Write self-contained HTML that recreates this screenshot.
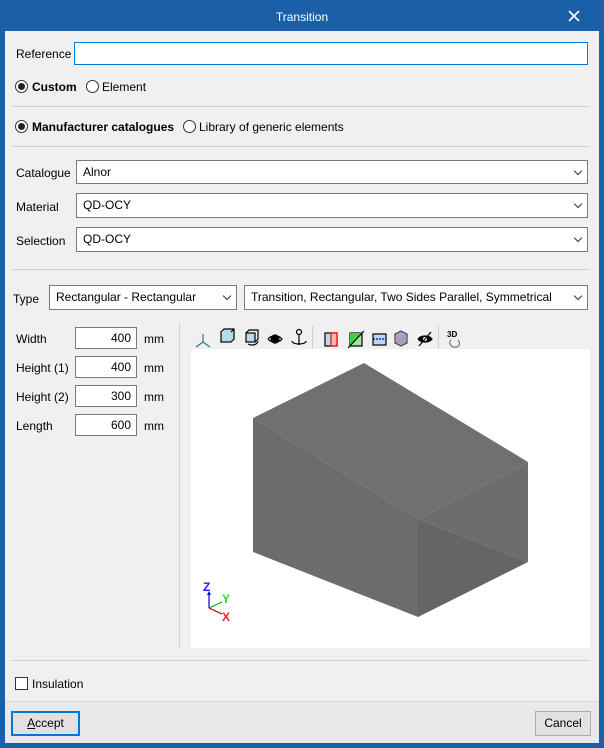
<!DOCTYPE html>
<html><head><meta charset="utf-8"><style>
*{box-sizing:border-box;margin:0;padding:0}
body{width:604px;height:748px;background:#1a5fa8;font-family:"Liberation Sans",sans-serif;font-size:12px;color:#000;position:relative;overflow:hidden}
.a{position:absolute}
#main{left:5px;top:31px;width:594px;height:670px;background:#f0f0f0}
#foot{left:5px;top:701px;width:594px;height:42px;background:#e9e9e9;border-top:1px solid #d8d8d8}
.t{position:absolute;white-space:nowrap;line-height:14px}
.in{position:absolute;background:#fff;border:1px solid #7a7a7a}
.sel{position:absolute;background:#fff;border:1px solid #7a7a7a;padding-left:6px;line-height:23px;white-space:nowrap;overflow:hidden}
.sel:after{content:"";position:absolute;right:6px;top:7px;width:5px;height:5px;border-right:1px solid #333;border-bottom:1px solid #333;transform:rotate(45deg)}
.hr{position:absolute;height:1px;background:#d0d0d0}
.rad{position:absolute;width:13px;height:13px;border:1px solid #333;border-radius:50%;background:#fff}
.rad.on:after{content:"";position:absolute;left:2px;top:2px;width:7px;height:7px;border-radius:50%;background:#222}
.num{text-align:right;padding-right:5px;line-height:20px}
.btn{position:absolute;background:#e1e1e1;border:1px solid #adadad;text-align:center;line-height:23px}
</style></head><body>
<div class="t" style="left:0;width:604px;text-align:center;top:10px;color:#fff">Transition</div>
<svg class="a" style="left:568px;top:10px" width="12" height="12"><path d="M1 1L11 11M11 1L1 11" stroke="#fff" stroke-width="1.6"/></svg>
<div class="a" id="main"></div>
<div class="a" id="foot"></div>

<div class="t" style="left:16px;top:47px">Reference</div>
<div class="in" style="left:74px;top:42px;width:514px;height:23px;border-color:#0078d7"></div>
<div class="rad on" style="left:15px;top:80px"></div><div class="t" style="left:32px;top:80px;font-weight:bold">Custom</div>
<div class="rad" style="left:86px;top:80px"></div><div class="t" style="left:102px;top:80px">Element</div>
<div class="hr" style="left:12px;top:106px;width:578px"></div>
<div class="rad on" style="left:15px;top:120px"></div><div class="t" style="left:32px;top:120px;font-weight:bold">Manufacturer catalogues</div>
<div class="rad" style="left:183px;top:120px"></div><div class="t" style="left:199px;top:120px">Library of generic elements</div>
<div class="hr" style="left:12px;top:146px;width:578px"></div>

<div class="t" style="left:16px;top:166px">Catalogue</div>
<div class="sel" style="left:76px;top:160px;width:512px;height:24px">Alnor</div>
<div class="t" style="left:16px;top:200px">Material</div>
<div class="sel" style="left:76px;top:193px;width:512px;height:25px">QD-OCY</div>
<div class="t" style="left:16px;top:234px">Selection</div>
<div class="sel" style="left:76px;top:227px;width:512px;height:25px">QD-OCY</div>
<div class="hr" style="left:12px;top:269px;width:578px"></div>

<div class="t" style="left:13px;top:292px">Type</div>
<div class="sel" style="left:49px;top:285px;width:188px;height:25px">Rectangular - Rectangular</div>
<div class="sel" style="left:244px;top:285px;width:344px;height:25px">Transition, Rectangular, Two Sides Parallel, Symmetrical</div>

<div class="t" style="left:16px;top:332px">Width</div><div class="in num" style="left:75px;top:327px;width:62px;height:22px">400</div><div class="t" style="left:144px;top:332px">mm</div>
<div class="t" style="left:16px;top:361px">Height (1)</div><div class="in num" style="left:75px;top:356px;width:62px;height:22px">400</div><div class="t" style="left:144px;top:361px">mm</div>
<div class="t" style="left:16px;top:390px">Height (2)</div><div class="in num" style="left:75px;top:385px;width:62px;height:22px">300</div><div class="t" style="left:144px;top:390px">mm</div>
<div class="t" style="left:16px;top:419px">Length</div><div class="in num" style="left:75px;top:414px;width:62px;height:22px">600</div><div class="t" style="left:144px;top:419px">mm</div>

<div class="a" style="left:179px;top:322px;width:1px;height:326px;background:#d0d0d0"></div>

<svg class="a" style="left:190px;top:324px" width="280" height="26">
<g stroke-width="1.2" fill="none">
<path d="M13 10V18M13 18L6 23M13 18L20 23" stroke="#3a6f8f"/>
<rect x="31" y="8" width="10" height="10" fill="#b8dcef" stroke="#000"/><path d="M31 8l3-3h10v10l-3 3M41 8l3-3" stroke="#000" fill="#b8dcef"/>
<rect x="56" y="9" width="9" height="9" fill="#b8dcef" stroke="#000"/><path d="M56 9l3-3h9v9l-3 3M58 20c4 2 9 1 10-3" stroke="#000"/>
<circle cx="85" cy="15" r="4" fill="#000" stroke="#000"/><path d="M78 15c3-4 11-4 14 0c-3 4-11 4-14 0" stroke="#000"/>
<path d="M109 10V21" stroke="#000"/><circle cx="109" cy="8" r="2.5" stroke="#000"/><path d="M102 17c0 4 14 4 14 0" stroke="#000"/>
<rect x="135" y="9" width="12" height="13" fill="#b8dcef" stroke="#000"/><rect x="141" y="9" width="6" height="13" fill="#f7b6b6" stroke="#e00"/>
<rect x="160" y="9" width="12" height="13" fill="#9ee89e" stroke="#000"/><path d="M172 9L160 22V9z" fill="#4c4" /><path d="M158 24L174 7" stroke="#000"/>
<rect x="183" y="10" width="13" height="11" fill="#b8dcef" stroke="#000"/><path d="M183 15h13" stroke="#00c" stroke-dasharray="2 1"/>
<path d="M205 10l6-3 6 3v9l-6 3-6-3z" fill="#9ac" stroke="#444"/><path d="M205 13l6 3 6-3M205 16l6 3 6-3" stroke="#c88"/>
<path d="M228 15c3-4 11-4 14 0c-3 4-11 4-14 0" stroke="#000" fill="#000"/><circle cx="235" cy="15" r="2" fill="#fff"/><path d="M229 22L241 8" stroke="#000"/>
<path d="M261 16c-3 2 0 8 4 7 4 1 6-4 3-7" stroke="#777"/>
</g>
<text x="257" y="13" font-size="8" font-weight="bold" font-family="Liberation Sans">3D</text>
<rect x="122" y="2" width="1" height="22" fill="#ccc"/><rect x="248" y="2" width="1" height="22" fill="#ccc"/>
</svg>

<svg class="a" style="left:191px;top:349px" width="399" height="299">
<rect width="399" height="299" fill="#fff"/>
<g transform="translate(-191,-349)">
<path d="M364 363L253 418L418 519L528 462Z" fill="#707070"/>
<path d="M253 418L253 552L418 617L418 519Z" fill="#6c6c6c"/>
<path d="M418 519L528 462L528 562Z" fill="#6d6d6d"/>
<path d="M418 519L528 562L418 617Z" fill="#656565"/>
</g>
<path d="M18 259V244" stroke="#00c" stroke-width="1.2"/><path d="M16 246l2-4 2 4z" fill="#00c"/>
<path d="M18 259L31 253" stroke="#0a0" stroke-width="1"/>
<path d="M18 259L31 265" stroke="#900" stroke-width="1.2"/>
<text x="12" y="242" font-size="12" font-weight="bold" fill="#22f" font-family="Liberation Sans">Z</text>
<text x="31" y="254" font-size="12" font-weight="bold" fill="#2d2" font-family="Liberation Sans">Y</text>
<text x="31" y="272" font-size="12" font-weight="bold" fill="#f22" font-family="Liberation Sans">X</text>
</svg>

<div class="hr" style="left:12px;top:660px;width:578px"></div>
<div class="a" style="left:15px;top:677px;width:13px;height:13px;border:1px solid #333;background:#fff"></div>
<div class="t" style="left:32px;top:677px">Insulation</div>

<div class="btn" style="left:11px;top:711px;height:25px;border:2px solid #0078d7;line-height:21px;width:69px"><u>A</u>ccept</div>
<div class="btn" style="left:535px;top:711px;width:56px;height:25px">Cancel</div>
</body></html>
